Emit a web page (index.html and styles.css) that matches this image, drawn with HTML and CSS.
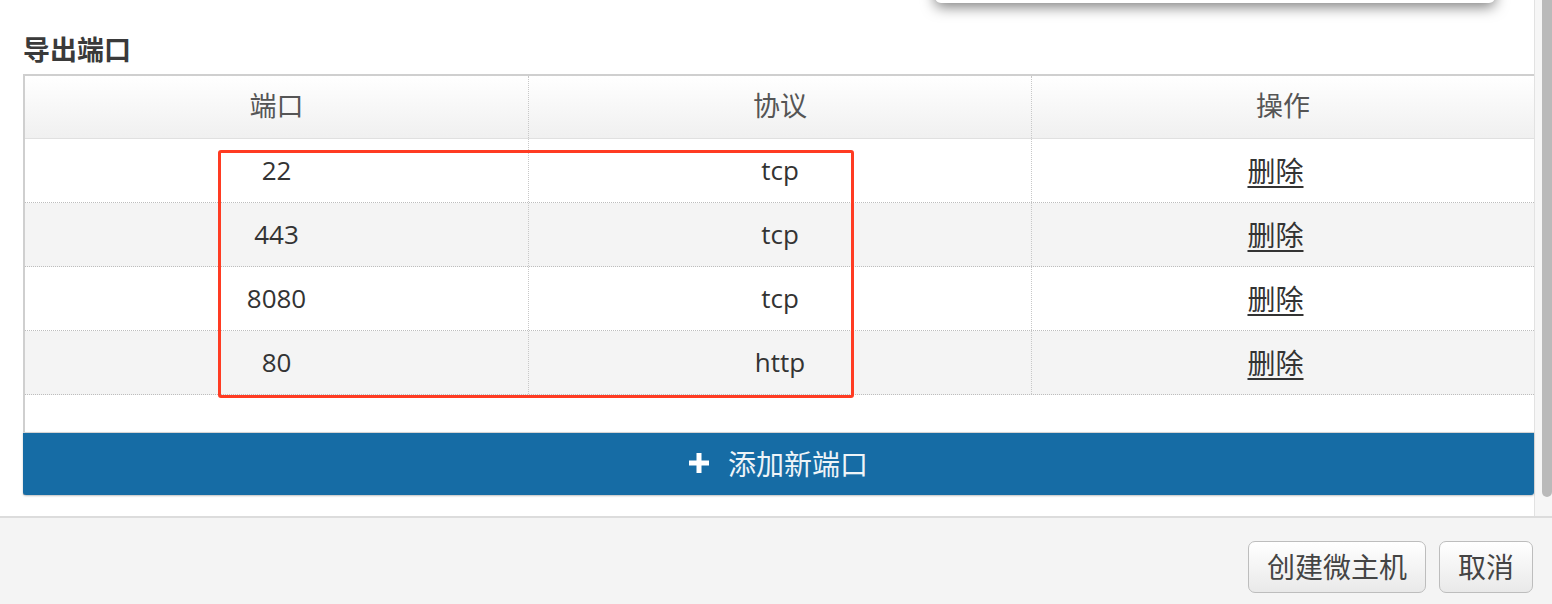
FILE: index.html
```html
<!DOCTYPE html>
<html lang="zh-CN">
<head>
<meta charset="utf-8">
<title>导出端口</title>
<link rel="stylesheet" href="styles.css">
</head>
<body>
<div class="modal">
  <div class="main">
    <div class="content">
      <div class="popup-edge"></div>
      <h3 class="title">导出端口</h3>
      <div class="ports">
        <div class="ports-table">
          <div class="row head">
            <div class="cell">端口</div>
            <div class="cell">协议</div>
            <div class="cell">操作</div>
          </div>
          <div class="row">
            <div class="cell">22</div>
            <div class="cell">tcp</div>
            <div class="cell"><a class="del">删除</a></div>
          </div>
          <div class="row alt">
            <div class="cell">443</div>
            <div class="cell">tcp</div>
            <div class="cell"><a class="del">删除</a></div>
          </div>
          <div class="row">
            <div class="cell">8080</div>
            <div class="cell">tcp</div>
            <div class="cell"><a class="del">删除</a></div>
          </div>
          <div class="row alt">
            <div class="cell">80</div>
            <div class="cell">http</div>
            <div class="cell"><a class="del">删除</a></div>
          </div>
        </div>
        <div class="spacer"></div>
        <button class="add-btn"><svg class="plus" width="20" height="20" viewBox="0 0 20 20"><path d="M7.5 0h5v7.5H20v5h-7.5V20h-5v-7.5H0v-5h7.5z" fill="#fff"/></svg><span>添加新端口</span></button>
      </div>
      <div class="annotation"></div>
    </div>
    <div class="scrollbar"></div>
    <div class="thumb"></div>
  </div>
  <div class="footer">
    <button class="btn">创建微主机</button>
    <button class="btn">取消</button>
  </div>
</div>
</body>
</html>
```

FILE: styles.css
```css
* { box-sizing: border-box; }
html, body { margin: 0; padding: 0; }
body {
  width: 1552px;
  height: 604px;
  overflow: hidden;
  background: #f4f4f4;
  font-family: "Open Sans", "Noto Sans CJK SC", sans-serif;
  font-size: 26px;
  color: #333;
}
.modal {
  display: flex;
  flex-direction: column;
  width: 1552px;
  height: 604px;
}
.main {
  position: relative;
  display: flex;
  width: 1552px;
  height: 516px;
  background: #fff;
}
.content {
  position: relative;
  flex: 0 0 1535px;
  width: 1535px;
  border-right: 1px solid #e2e2e2;
  padding-left: 23px;
  padding-top: 31px;
}
.popup-edge {
  position: absolute;
  left: 935px;
  top: -80px;
  width: 560px;
  height: 83px;
  background: #fff;
  border-radius: 6px;
  box-shadow: 0 4px 14px rgba(0, 0, 0, 0.5);
}
.title {
  margin: 0;
  height: 43px;
  font-family: "Noto Sans CJK SC", sans-serif;
  font-size: 27px;
  line-height: 36px;
  font-weight: 700;
  color: #3a3a3a;
}
.ports {
  border-left: 2px solid #cfcfcf;
  border-top: 2px solid #cfcfcf;
}
.row {
  display: grid;
  grid-template-columns: 1fr 1fr 1fr;
  height: 64px;
  border-bottom: 1px dotted #bdbdbd;
  background: #fff;
}
.row.alt { background: #f4f4f4; }
.row.head {
  height: 63px;
  border-bottom: 1px solid #e0e0e0;
  background: linear-gradient(#ffffff, #f0f0f0);
  color: #555;
  font-family: "Noto Sans CJK SC", sans-serif;
  font-size: 27px;
}
.row.head .cell { padding-bottom: 6px; }
.cell {
  display: flex;
  align-items: center;
  justify-content: center;
  padding-bottom: 2px;
}
.cell + .cell { border-left: 1px dotted #c8c8c8; }
.del {
  margin-right: 15px;
  font-family: "Noto Sans CJK SC", sans-serif;
  font-size: 28px;
  color: #333;
  text-decoration: underline;
  text-decoration-thickness: 2px;
  text-underline-offset: 4px;
  cursor: pointer;
}
.spacer { height: 37px; }
.add-btn {
  display: flex;
  align-items: center;
  justify-content: center;
  gap: 19px;
  width: calc(100% + 2px);
  margin-left: -2px;
  height: 63px;
  border: 0;
  border-top: 1px solid #d4d4d4;
  border-radius: 0 0 3px 3px;
  background: #166ca5;
  color: #eef4f8;
  font-family: "Noto Sans CJK SC", sans-serif;
  font-size: 28px;
  box-shadow: 0 1px 2px rgba(0, 0, 0, 0.25);
  padding: 0 0 2px 0;
}
.plus { display: block; }
.annotation {
  position: absolute;
  left: 218px;
  top: 150px;
  width: 636px;
  height: 248px;
  border: 3px solid #ff3b22;
  border-radius: 3px;
}
.scrollbar {
  flex: 0 0 17px;
  height: 516px;
  background: #f6f6f6;
}
.thumb {
  position: absolute;
  right: 0;
  top: 0;
  width: 10px;
  height: 497px;
  background: #bababa;
  border-radius: 0 0 6px 6px;
}
.footer {
  flex: 1;
  display: flex;
  justify-content: flex-end;
  align-items: flex-start;
  gap: 13px;
  padding: 23px 19px 0 0;
  border-top: 2px solid #dcdcdc;
  background: #f4f4f4;
}
.btn {
  height: 52px;
  padding: 0 18px 2px;
  border: 1px solid #bdbdbd;
  border-radius: 7px;
  background: linear-gradient(#ffffff, #e9e9e9);
  color: #444;
  font-family: "Noto Sans CJK SC", sans-serif;
  font-size: 28px;
}
```
